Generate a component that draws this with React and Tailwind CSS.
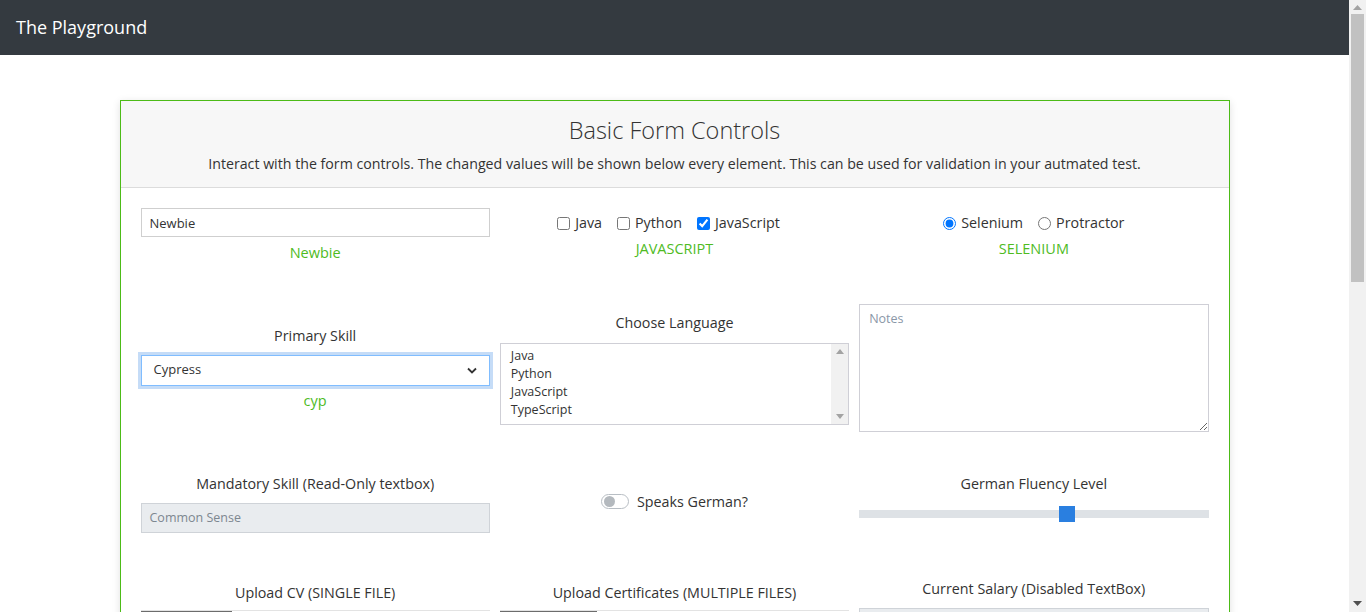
import React from 'react';

const font = { fontFamily: '"Open Sans", "Noto Sans", sans-serif' };

const Label = ({ children, className = '' }) => (
    <div className={`text-center text-[14.3px] text-[#333] leading-[22px] ${className}`}>{children}</div>
);

const Value = ({ children }) => (
    <div className="text-center text-[14.5px] leading-[22px] text-[#4fbb1f]">{children}</div>
);

const Scrollbar = () => (
    <div className="w-[17px] h-full bg-[#f1f1f1] flex flex-col items-center shrink-0">
        <svg width="9" height="6" viewBox="0 0 9 6" className="mt-[5px]"><path d="M0 5 L4.5 0 L9 5 Z" fill="#a3a3a3" /></svg>
        <div className="mt-[3px] w-[13px] h-[268px] bg-[#c1c1c1]" />
        <div className="flex-1" />
        <svg width="9" height="6" viewBox="0 0 9 6" className="mb-[5px]"><path d="M0 0 L9 0 L4.5 5 Z" fill="#505050" /></svg>
    </div>
);

export default function App() {
    return (
        <div className="flex h-[612px] w-full overflow-hidden bg-white" style={font}>
            <div className="flex-1 flex flex-col overflow-hidden">
                <header className="h-[55px] shrink-0 bg-[#343a40] flex items-center px-4">
                    <span className="text-white text-[18px]">The Playground</span>
                </header>

                <main className="pt-[45px]">
                    <div className="w-[1110px] mx-auto border border-[#4cbb17] shadow-[0_2px_8px_rgba(0,0,0,0.12)]">
                        <div className="bg-[#f7f7f7] border-b border-[#dcdcdc] h-[87px] flex flex-col items-center pt-[13px]">
                            <h1 className="text-[23.5px] leading-[32px] font-light text-[#333]">Basic Form Controls</h1>
                            <p className="mt-[7px] text-[14.2px] leading-[22px] text-[#333]">
                                Interact with the form controls. The changed values will be shown below every element. This can be used for validation in your autmated test.
                            </p>
                        </div>

                        <div className="px-[20px] pt-[20px] pb-[20px] grid grid-cols-3 gap-x-[10px] items-center">
                            {/* row 1 */}
                            <div className="flex flex-col gap-[5px]">
                                <input
                                    readOnly
                                    value="Newbie"
                                    className="h-[29px] w-full border border-[#cfcfcf] px-[8px] text-[13px] text-[#333] outline-none"
                                />
                                <Value>Newbie</Value>
                            </div>
                            <div className="flex flex-col items-center gap-[4px]">
                                <div className="flex items-center gap-[15px] text-[14.3px] text-[#333] leading-[22px] pr-[12px]">
                                    <label className="flex items-center gap-[5px]">
                                        <input type="checkbox" className="w-[13px] h-[13px] accent-[#0075ff]" /> Java
                                    </label>
                                    <label className="flex items-center gap-[5px]">
                                        <input type="checkbox" className="w-[13px] h-[13px] accent-[#0075ff]" /> Python
                                    </label>
                                    <label className="flex items-center gap-[5px]">
                                        <input type="checkbox" defaultChecked className="w-[13px] h-[13px] accent-[#0075ff]" /> JavaScript
                                    </label>
                                </div>
                                <Value>JAVASCRIPT</Value>
                            </div>
                            <div className="flex flex-col items-center gap-[4px]">
                                <div className="flex items-center gap-[15px] text-[14.3px] text-[#333] leading-[22px]">
                                    <label className="flex items-center gap-[5px]">
                                        <input type="radio" name="tool" defaultChecked className="w-[13px] h-[13px] accent-[#0075ff]" /> Selenium
                                    </label>
                                    <label className="flex items-center gap-[5px]">
                                        <input type="radio" name="tool" className="w-[13px] h-[13px] accent-[#0075ff]" /> Protractor
                                    </label>
                                </div>
                                <Value>SELENIUM</Value>
                            </div>

                            {/* row 2 */}
                            <div className="flex flex-col mt-[40px]">
                                <Label>Primary Skill</Label>
                                <div className="mt-[8px] h-[31px] border border-[#80bdff] shadow-[0_0_0_3px_#c5dcf7] flex items-center justify-between px-[12px] text-[13px] text-[#333]">
                                    <span>Cypress</span>
                                    <svg width="10" height="7" viewBox="0 0 10 7"><path d="M1 1.5 L5 5.5 L9 1.5" stroke="#333" strokeWidth="1.8" fill="none" /></svg>
                                </div>
                                <div className="mt-[4px]"><Value>cyp</Value></div>
                            </div>
                            <div className="flex flex-col mt-[40px] gap-[9px]">
                                <Label>Choose Language</Label>
                                <div className="h-[82px] border border-[#cfcfd6] flex">
                                    <div className="flex-1 pt-[3px] pl-[10px] text-[12.5px] leading-[18px] text-[#333]">
                                        <div>Java</div>
                                        <div>Python</div>
                                        <div>JavaScript</div>
                                        <div>TypeScript</div>
                                    </div>
                                    <div className="w-[17px] bg-[#f1f1f1] flex flex-col items-center justify-between py-[5px]">
                                        <svg width="8" height="5" viewBox="0 0 8 5"><path d="M0 5 L4 0 L8 5 Z" fill="#a3a3a3" /></svg>
                                        <svg width="8" height="5" viewBox="0 0 8 5"><path d="M0 0 L8 0 L4 5 Z" fill="#a3a3a3" /></svg>
                                    </div>
                                </div>
                            </div>
                            <div className="mt-[40px]">
                                <textarea
                                    placeholder="Notes"
                                    className="block w-full h-[128px] border border-[#cfcfd6] px-[9px] py-[5px] text-[12.5px] placeholder:text-[#8a97a8] outline-none"
                                />
                            </div>

                            {/* row 3 */}
                            <div className="flex flex-col mt-[41px] gap-[8px] self-start">
                                <Label>Mandatory Skill (Read-Only textbox)</Label>
                                <div className="h-[30px] border border-[#cfd3d8] bg-[#e9ecef] flex items-center px-[8px] text-[12.5px] text-[#7d8790]">
                                    Common Sense
                                </div>
                            </div>
                            <div className="flex items-center justify-center gap-[8px] mt-[41px] self-start pt-[18px]">
                                <div className="w-[28px] h-[15px] rounded-full border border-[#b8bec4] bg-white flex items-center px-[2px]">
                                    <div className="w-[11px] h-[11px] rounded-full bg-[#b4b9be]" />
                                </div>
                                <span className="text-[14.3px] text-[#333]">Speaks German?</span>
                            </div>
                            <div className="flex flex-col mt-[41px] gap-[11px] self-start">
                                <Label>German Fluency Level</Label>
                                <div className="relative h-[16px] flex items-center">
                                    <div className="w-full h-[8px] bg-[#dee2e6]" />
                                    <div className="absolute left-[200px] top-0 w-[16px] h-[16px] bg-[#2a7fe0]" />
                                </div>
                            </div>

                            {/* row 4 */}
                            <div className="flex flex-col mt-[45px] self-start pt-[4px] gap-[6px]">
                                <Label>Upload CV (SINGLE FILE)</Label>
                                <div className="h-[30px] flex border-t border-[#e3e3e3]">
                                    <div className="w-[91px] bg-[#6c6c6c]" />
                                    <div className="flex-1" />
                                </div>
                            </div>
                            <div className="flex flex-col mt-[45px] self-start pt-[4px] gap-[6px]">
                                <Label>Upload Certificates (MULTIPLE FILES)</Label>
                                <div className="h-[30px] flex border-t border-[#e3e3e3]">
                                    <div className="w-[97px] bg-[#6c6c6c]" />
                                    <div className="flex-1" />
                                </div>
                            </div>
                            <div className="flex flex-col mt-[45px] self-start gap-[8px]">
                                <Label>Current Salary (Disabled TextBox)</Label>
                                <div className="h-[30px] border border-[#cfd3d8] bg-[#e9ecef]" />
                            </div>
                        </div>
                    </div>
                </main>
            </div>
            <Scrollbar />
        </div>
    );
}
